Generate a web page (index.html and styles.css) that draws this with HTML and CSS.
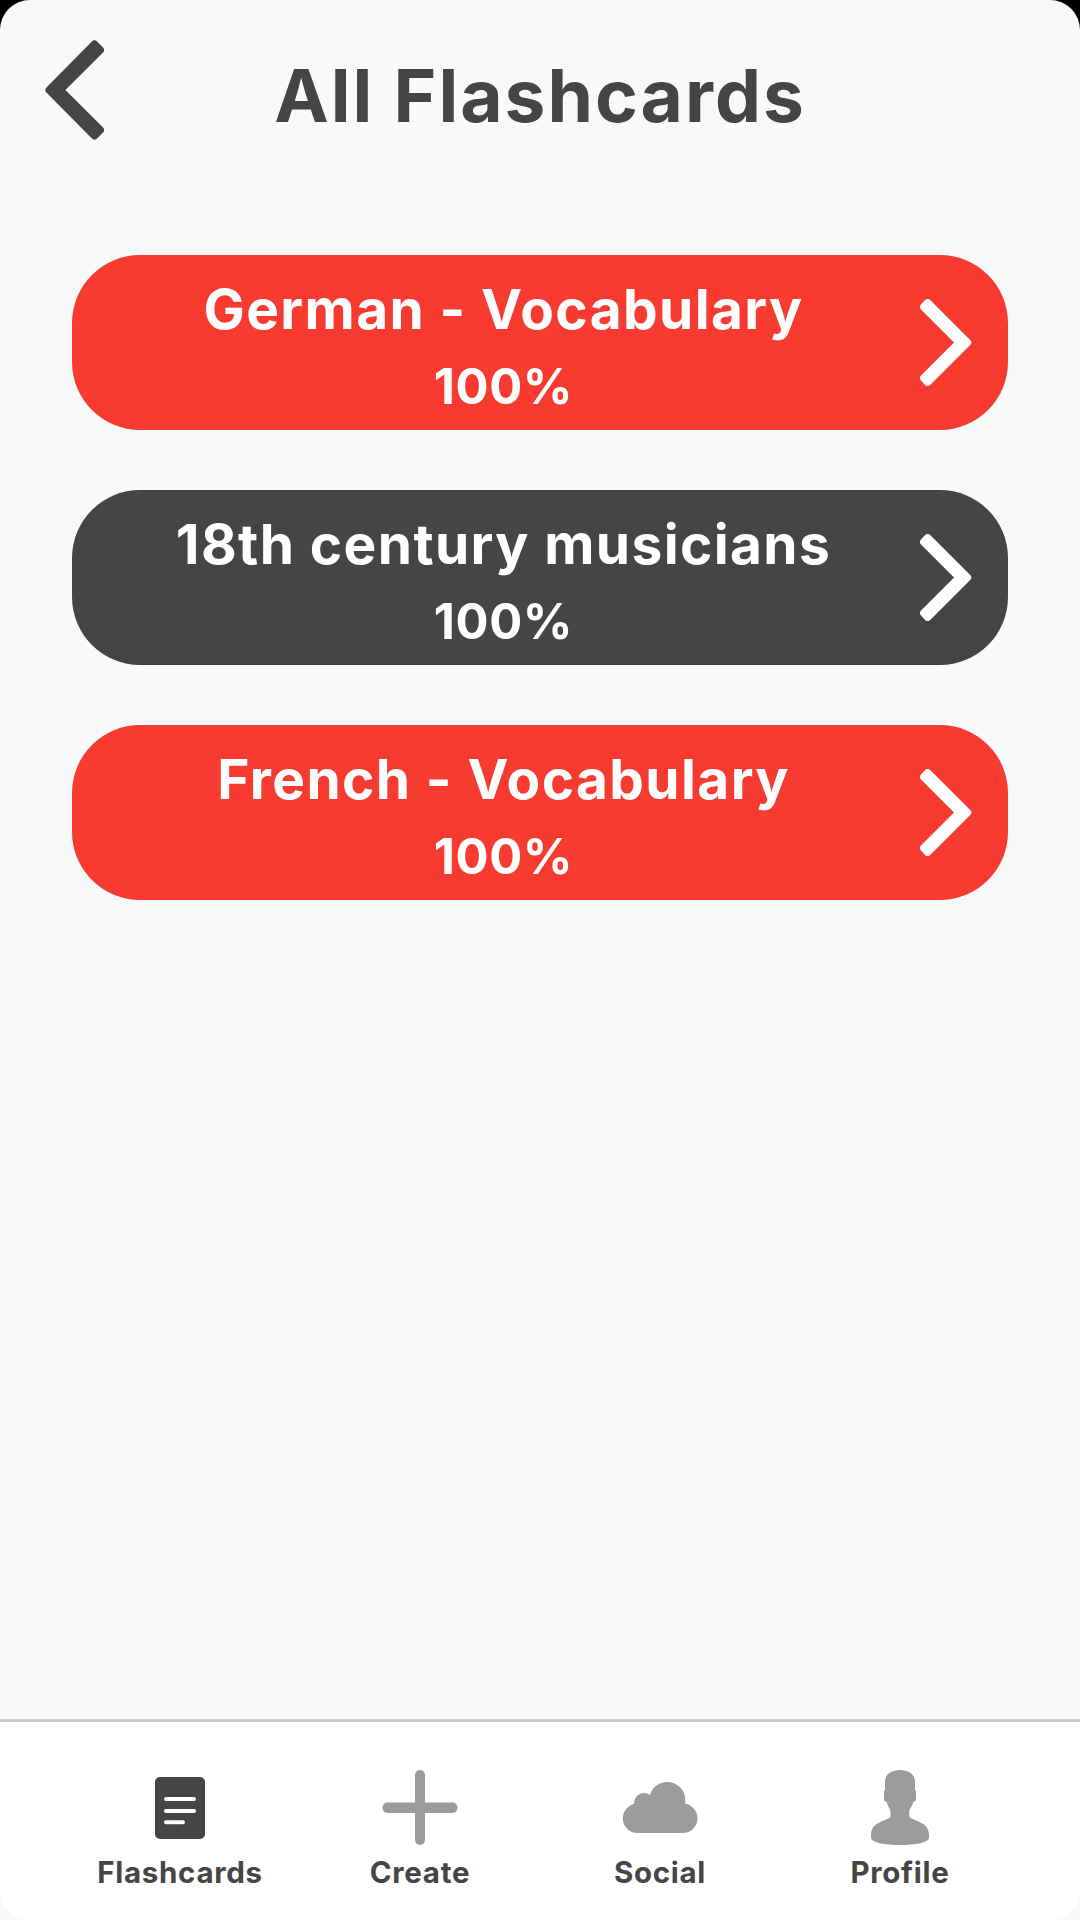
FILE: index.html
```html
<!DOCTYPE html>
<html lang="en">
<head>
    <meta charset="UTF-8">
    <meta name="viewport" content="width=device-width, initial-scale=1.0">
    <title>All Flashcards</title>
    <link rel="stylesheet" href="styles.css">
</head>
<body>
    <div class="screen">
        <header class="header">
            <a class="back" href="#" aria-label="Back">
                <svg width="60" height="100" viewBox="0 0 60 100"><path d="M4.5 50L49.5 4.5L55 10L14.8 50L55 90L49.5 95.5Z"/></svg>
            </a>
            <h1 class="title">All Flashcards</h1>
        </header>

        <main class="decks">
            <a class="deck" href="#">
                <div class="deck-text">
                    <div class="deck-name">German - Vocabulary</div>
                    <div class="deck-score">100%</div>
                </div>
                <svg class="arrow" width="52" height="87" viewBox="0 0 52 87"><path d="M47.7 43.5L7.7 3.5L3.5 8L39 43.5L3.5 79L7.7 83.5Z"/></svg>
            </a>
            <a class="deck dark" href="#">
                <div class="deck-text">
                    <div class="deck-name">18th century musicians</div>
                    <div class="deck-score">100%</div>
                </div>
                <svg class="arrow" width="52" height="87" viewBox="0 0 52 87"><path d="M47.7 43.5L7.7 3.5L3.5 8L39 43.5L3.5 79L7.7 83.5Z"/></svg>
            </a>
            <a class="deck" href="#">
                <div class="deck-text">
                    <div class="deck-name">French - Vocabulary</div>
                    <div class="deck-score">100%</div>
                </div>
                <svg class="arrow" width="52" height="87" viewBox="0 0 52 87"><path d="M47.7 43.5L7.7 3.5L3.5 8L39 43.5L3.5 79L7.7 83.5Z"/></svg>
            </a>
        </main>

        <nav class="tabbar">
            <a class="tab active" href="#">
                <svg width="76" height="75" viewBox="0 0 76 75">
                    <rect x="13" y="7" width="50" height="62" rx="5"/>
                    <path class="lines" d="M24 29H52M24 41H52M24 52.3H41"/>
                </svg>
                <span>Flashcards</span>
            </a>
            <a class="tab" href="#">
                <svg width="76" height="75" viewBox="0 0 76 75">
                    <rect x="33" y="0" width="10" height="75" rx="5"/>
                    <rect x="0.5" y="32.5" width="75" height="10.5" rx="5"/>
                </svg>
                <span>Create</span>
            </a>
            <a class="tab" href="#">
                <svg width="76" height="75" viewBox="0 0 76 75">
                    <circle cx="15.5" cy="48.3" r="14.7"/>
                    <circle cx="60.8" cy="48.3" r="14.7"/>
                    <circle cx="22" cy="33" r="10"/>
                    <circle cx="45.3" cy="30" r="18"/>
                    <path d="M13 34H61V63H15.5Z"/>
                </svg>
                <span>Social</span>
            </a>
            <a class="tab" href="#">
                <svg width="76" height="75" viewBox="0 0 75 75">
                    <path d="M37.5 0C46.5 0 52.5 4.5 52.5 12V20C53.8 20.5 53.5 22 53.5 24V29C53.5 31 52 31.7 50.7 32C50 36.5 46.7 38.8 46.7 42V46.5C50 51.5 66.5 51 66.5 65V67.5C66.5 72.5 53 75 37.5 75S8.5 72.5 8.5 67.5V65C8.5 51 25 51.5 28 46.5V42C28 38.8 25 36.5 24.3 32C23 31.7 21.5 31 21.5 29V24C21.5 22 21.2 20.5 22.5 20V12C22.5 4.5 28.5 0 37.5 0Z"/>
                </svg>
                <span>Profile</span>
            </a>
        </nav>
    </div>
</body>
</html>
```
FILE: styles.css
```css
* {
    box-sizing: border-box;
}

body {
    margin: 0;
    background: #000;
    font-family: Inter, "Liberation Sans", sans-serif;
}

a {
    color: inherit;
    text-decoration: none;
}

.screen {
    width: 1080px;
    height: 1920px;
    display: flex;
    flex-direction: column;
    background: #f8f9fb;
    border-radius: 30px 30px 0 0;
    overflow: hidden;
    color: #454545;
}

.header {
    display: grid;
    grid-template-columns: 60px 1fr 60px;
    padding: 40px 45px 0;
    height: 255px;
}

.back svg {
    display: block;
    fill: #454545;
    stroke: #454545;
    stroke-width: 8px;
    stroke-linejoin: round;
}

.title {
    margin: 11px 0 0;
    font-size: 73px;
    line-height: 90px;
    font-weight: 700;
    letter-spacing: 2px;
    text-align: center;
}

.decks {
    flex: 1;
    display: flex;
    flex-direction: column;
    gap: 60px;
    padding: 0 72px;
}

.deck {
    display: flex;
    align-items: center;
    height: 175px;
    padding: 0 36px 0 0;
    border-radius: 68px;
    background: #f83b30;
    color: #fff;
}

.deck.dark {
    background: #454545;
}

.deck-text {
    flex: 1;
    padding: 10px 0 0 15px;
    text-align: center;
    font-weight: 700;
}

.deck-name {
    font-size: 55px;
    line-height: 78px;
    letter-spacing: 1.4px;
}

.deck-score {
    font-size: 49px;
    line-height: 78px;
    letter-spacing: 0.6px;
}

.arrow {
    fill: #fff;
    stroke: #fff;
    stroke-width: 7px;
    stroke-linejoin: round;
}

.tabbar {
    display: flex;
    height: 201px;
    padding: 48px 60px 0;
    background: #fff;
    border-top: 3px solid #c9c9c9;
    border-radius: 0 0 30px 30px;
}

.tab {
    flex: 1;
    display: flex;
    flex-direction: column;
    align-items: center;
}

.tab svg {
    fill: #9b9b9b;
}

.tab.active svg {
    fill: #454545;
}

.tab .lines {
    stroke: #fff;
    stroke-width: 4px;
    stroke-linecap: round;
}

.tab span {
    margin-top: 9px;
    font-size: 29.5px;
    line-height: 36px;
    font-weight: 700;
    letter-spacing: 0.7px;
}
```
